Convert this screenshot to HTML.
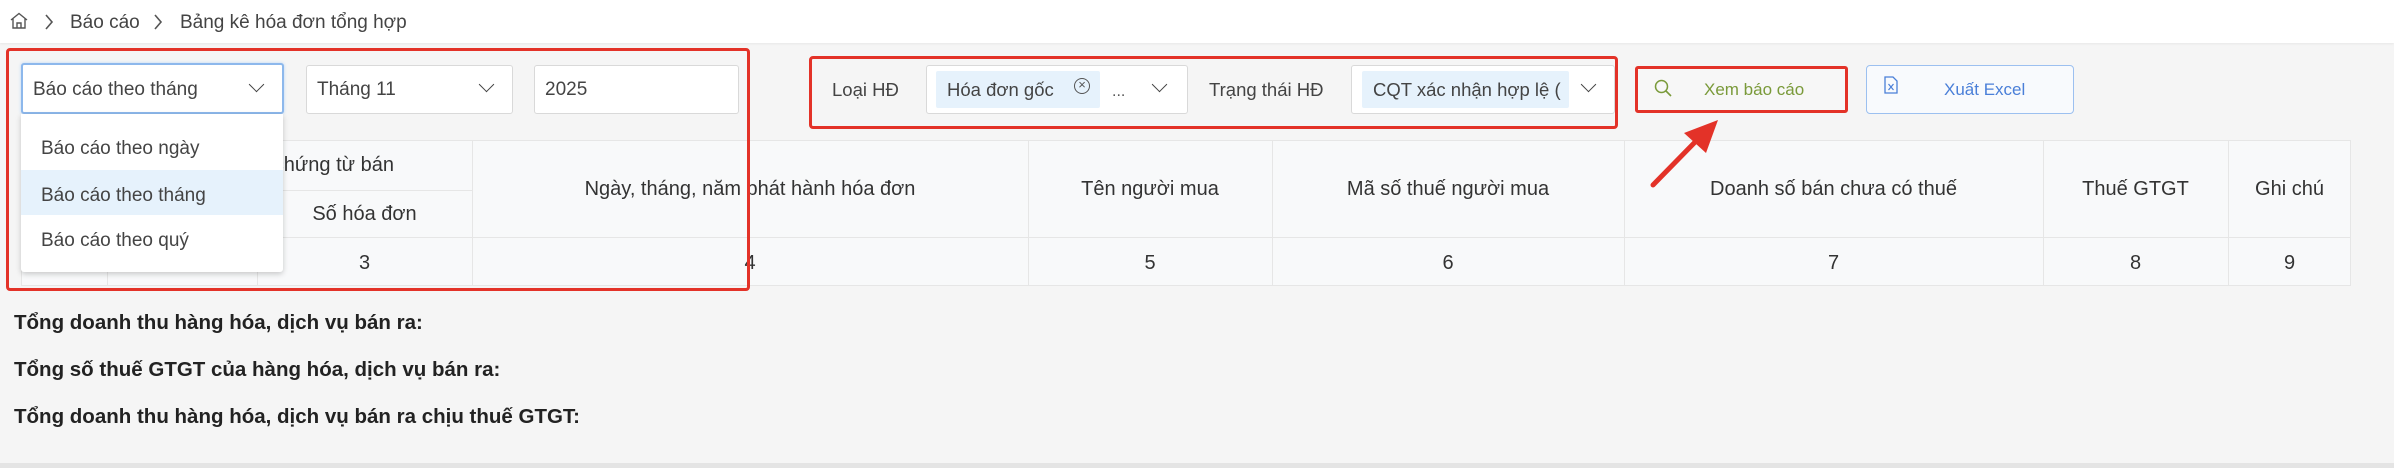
<!DOCTYPE html>
<html><head><meta charset="utf-8"><style>
*{box-sizing:border-box;margin:0;padding:0}
body{width:2394px;height:468px;background:#f5f5f5;font-family:"Liberation Sans","DejaVu Sans",sans-serif;color:#333;position:relative;overflow:hidden;font-size:20px}
.a{position:absolute}
.hdr{left:0;top:0;width:2394px;height:43px;background:#fff;box-shadow:0 1px 2px rgba(0,0,0,.06)}
.box{background:#fff;border:1px solid #d9d9d9;border-radius:3px}
.red{border:3px solid #e33228;border-radius:4px}
.chev{width:11px;height:11px;border-right:1.8px solid #444;border-bottom:1.8px solid #444;transform:rotate(45deg)}
.t{white-space:nowrap;line-height:23px}
.vl{width:1px;background:#e6e6e6}
.hl{height:1px;background:#e6e6e6}
.c{text-align:center}
.th{font-size:20px;color:#333}
.b{font-weight:bold;font-size:20.5px;color:#222}
</style></head><body>
<div class="a hdr"></div>
<svg class="a" style="left:10px;top:12px" width="18" height="17" viewBox="0 0 18 17"><path d="M1 8L9 1.5 17 8M3 6.5V16h12V6.5M7 16v-5h4v5" fill="none" stroke="#555" stroke-width="1.4"/></svg>
<svg class="a" style="left:44px;top:14px" width="10" height="16" viewBox="0 0 10 16"><path d="M2 1l6 7-6 7" fill="none" stroke="#555" stroke-width="1.6"/></svg>
<div class="a t" style="left:70px;top:11px;font-size:19px;color:#444">Báo cáo</div>
<svg class="a" style="left:153px;top:14px" width="10" height="16" viewBox="0 0 10 16"><path d="M2 1l6 7-6 7" fill="none" stroke="#555" stroke-width="1.6"/></svg>
<div class="a t" style="left:180px;top:11px;font-size:19px;color:#444">Bảng kê hóa đơn tổng hợp</div>

<!-- table -->
<div class="a" style="left:21px;top:140px;width:2330px;height:146px;background:#f8f9fa;border:1px solid #e6e6e6"></div>
<div class="a hl" style="left:107px;top:190px;width:365px"></div>
<div class="a hl" style="left:21px;top:237px;width:2330px"></div>
<div class="a vl" style="left:107px;top:140px;height:146px"></div>
<div class="a vl" style="left:257px;top:190px;height:96px"></div>
<div class="a vl" style="left:472px;top:140px;height:146px"></div>
<div class="a vl" style="left:1028px;top:140px;height:146px"></div>
<div class="a vl" style="left:1272px;top:140px;height:146px"></div>
<div class="a vl" style="left:1624px;top:140px;height:146px"></div>
<div class="a vl" style="left:2043px;top:140px;height:146px"></div>
<div class="a vl" style="left:2228px;top:140px;height:146px"></div>
<div class="a t c th" style="left:107px;top:154px;width:365px">Hóa đơn, chứng từ bán</div>
<div class="a t c th" style="left:257px;top:203px;width:215px">Số hóa đơn</div>
<div class="a t c th" style="left:472px;top:178px;width:556px">Ngày, tháng, năm phát hành hóa đơn</div>
<div class="a t c th" style="left:1028px;top:178px;width:244px">Tên người mua</div>
<div class="a t c th" style="left:1272px;top:178px;width:352px">Mã số thuế người mua</div>
<div class="a t c th" style="left:1624px;top:178px;width:419px">Doanh số bán chưa có thuế</div>
<div class="a t c th" style="left:2043px;top:178px;width:185px">Thuế GTGT</div>
<div class="a t c th" style="left:2228px;top:178px;width:123px">Ghi chú</div>
<div class="a t c th" style="left:257px;top:252px;width:215px">3</div>
<div class="a t c th" style="left:472px;top:252px;width:556px">4</div>
<div class="a t c th" style="left:1028px;top:252px;width:244px">5</div>
<div class="a t c th" style="left:1272px;top:252px;width:352px">6</div>
<div class="a t c th" style="left:1624px;top:252px;width:419px">7</div>
<div class="a t c th" style="left:2043px;top:252px;width:185px">8</div>
<div class="a t c th" style="left:2228px;top:252px;width:123px">9</div>

<!-- summaries -->
<div class="a t b" style="left:14px;top:311px">Tổng doanh thu hàng hóa, dịch vụ bán ra:</div>
<div class="a t b" style="left:14px;top:358px">Tổng số thuế GTGT của hàng hóa, dịch vụ bán ra:</div>
<div class="a t b" style="left:14px;top:405px">Tổng doanh thu hàng hóa, dịch vụ bán ra chịu thuế GTGT:</div>
<div class="a" style="left:0;top:463px;width:2394px;height:5px;background:#e4e4e4"></div>

<!-- filters group 1 -->
<div class="a box" style="left:21px;top:63px;width:263px;height:51px;border:2px solid #8db8ec;box-shadow:0 0 3px #b9d6f7"></div>
<div class="a t" style="left:33px;top:78px;font-size:19px;color:#444">Báo cáo theo tháng</div>
<div class="a chev" style="left:251px;top:79px"></div>
<div class="a box" style="left:306px;top:65px;width:207px;height:49px"></div>
<div class="a t" style="left:317px;top:78px;font-size:19px;color:#444">Tháng 11</div>
<div class="a chev" style="left:481px;top:79px"></div>
<div class="a box" style="left:534px;top:65px;width:205px;height:49px"></div>
<div class="a t" style="left:545px;top:78px;font-size:19px;color:#444">2025</div>
<!-- dropdown -->
<div class="a" style="left:21px;top:114px;width:262px;height:158px;background:#fff;box-shadow:0 2px 6px rgba(0,0,0,.2);border-radius:0 0 3px 3px"></div>
<div class="a" style="left:21px;top:170px;width:262px;height:45px;background:#e6f2fc"></div>
<div class="a t" style="left:41px;top:137px;font-size:19px;color:#444">Báo cáo theo ngày</div>
<div class="a t" style="left:41px;top:184px;font-size:19px;color:#444">Báo cáo theo tháng</div>
<div class="a t" style="left:41px;top:229px;font-size:19px;color:#444">Báo cáo theo quý</div>
<div class="a red" style="left:6px;top:48px;width:744px;height:243px"></div>

<!-- filters group 2 -->
<div class="a t" style="left:832px;top:78px;color:#444;font-size:18.5px">Loại HĐ</div>
<div class="a box" style="left:926px;top:65px;width:262px;height:49px"></div>
<div class="a" style="left:936px;top:71px;width:164px;height:37px;background:#e6f2fc;border-radius:2px"></div>
<div class="a t" style="left:947px;top:78px;color:#444;font-size:18.5px">Hóa đơn gốc</div>
<div class="a" style="left:1074px;top:78px;width:16px;height:16px;border:1.5px solid #555;border-radius:50%;font-size:13px;line-height:12px;text-align:center;color:#555">×</div>
<div class="a t" style="left:1112px;top:80px;color:#555;font-size:16px">...</div>
<div class="a chev" style="left:1154px;top:79px"></div>
<div class="a t" style="left:1209px;top:78px;color:#444;font-size:18.5px">Trạng thái HĐ</div>
<div class="a box" style="left:1351px;top:65px;width:264px;height:49px;overflow:hidden">
  <div class="a" style="left:10px;top:5px;width:207px;height:37px;background:#e6f2fc;border-radius:2px"></div>
  <div class="a t" style="left:21px;top:12px;color:#444;font-size:18.5px">CQT xác nhận hợp lệ (</div>
  <div class="a" style="left:217px;top:4px;width:46px;height:40px;background:#fff"></div>
  <div class="a chev" style="left:231px;top:13px"></div>
</div>
<div class="a red" style="left:809px;top:56px;width:809px;height:73px"></div>

<!-- buttons -->
<div class="a" style="left:1635px;top:66px;width:213px;height:47px;background:#f7f7f7;border:3px solid #e33228;border-radius:3px"></div>
<svg class="a" style="left:1654px;top:79px" width="18" height="18" viewBox="0 0 18 18"><circle cx="7.5" cy="7.5" r="6" fill="none" stroke="#7a9a3a" stroke-width="1.5"/><path d="M12 12l5 5" stroke="#7a9a3a" stroke-width="1.6"/></svg>
<div class="a t" style="left:1704px;top:78px;color:#7a9a3a;font-size:17px">Xem báo cáo</div>
<div class="a" style="left:1866px;top:65px;width:208px;height:49px;border:1.5px solid #9cc0f0;border-radius:4px;background:#f8fafd"></div>
<svg class="a" style="left:1884px;top:76px" width="14" height="18" viewBox="0 0 14 18"><path d="M1 1h8l4 4v12H1z" fill="none" stroke="#4a7fd8" stroke-width="1.3"/><path d="M4.5 8l5 6M9.5 8l-5 6" stroke="#4a7fd8" stroke-width="1.2"/></svg>
<div class="a t" style="left:1944px;top:78px;color:#4a7fd8;font-size:17px">Xuất Excel</div>
<!-- arrow -->
<svg class="a" style="left:1640px;top:115px" width="100" height="80" viewBox="0 0 100 80"><path d="M13 70L60 22" stroke="#e33228" stroke-width="5" stroke-linecap="round"/><path d="M78 5L44 18 66 38z" fill="#e33228"/></svg>
</body></html>
